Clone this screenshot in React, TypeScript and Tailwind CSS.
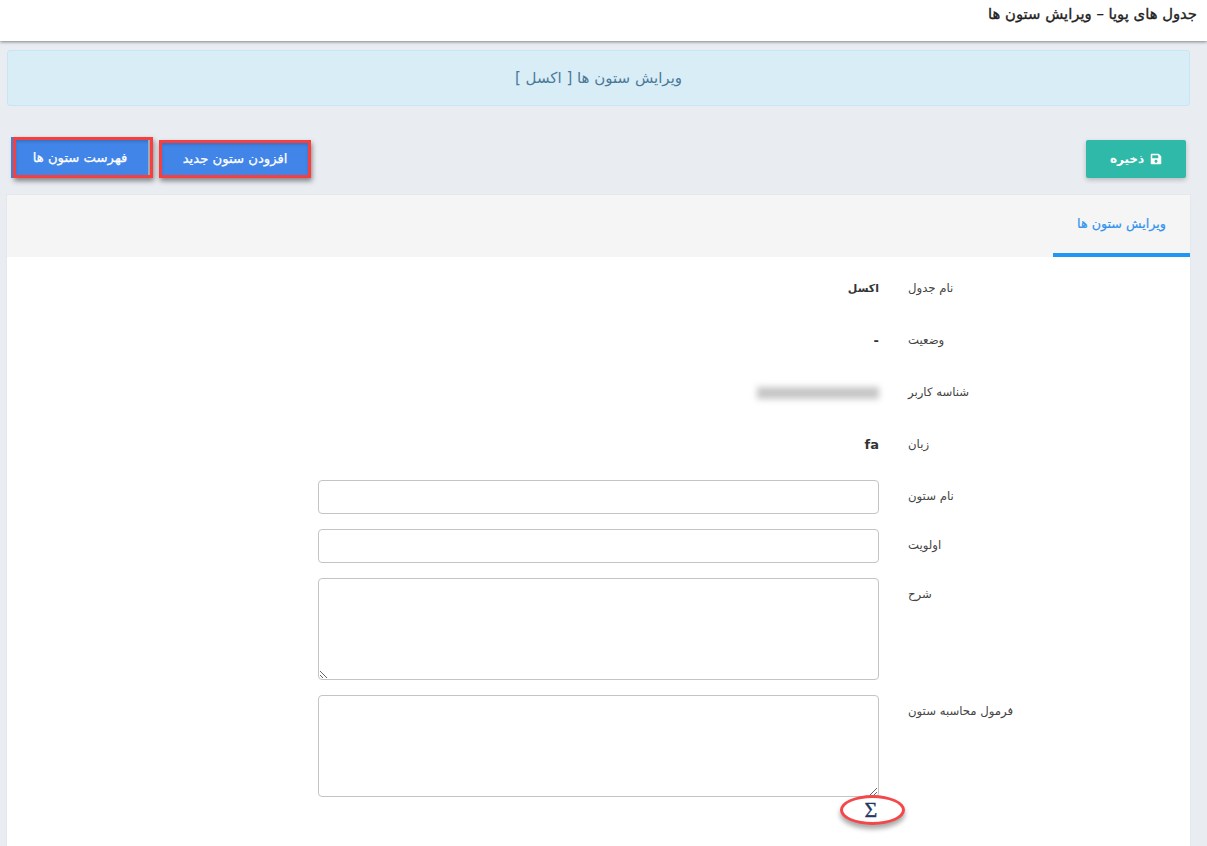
import React from 'react';
import { FaSave } from 'react-icons/fa';

const font = "[font-family:'DejaVu_Sans','Noto_Sans',sans-serif]";

const infoRows = [
  { label: 'نام جدول', value: 'اکسل', size: 'text-[11px]' },
  { label: 'وضعیت', value: '-', size: 'text-[13px]' },
  { label: 'شناسه کاربر', value: '', size: 'text-[13px]' },
  { label: 'زبان', value: 'fa', size: 'text-[13px]' },
];

const App: React.FC = () => {
  return (
    <div dir="rtl" className={`h-[846px] w-[1207px] overflow-hidden bg-[#e9ecf1] ${font}`}>
      {/* Header */}
      <div className="h-[41px] bg-white pt-[5px] pr-[10px] text-[14.8px] leading-[18px] text-[#222] shadow-[0_1px_3px_rgba(0,0,0,0.45)] [-webkit-text-stroke:0.35px_#222]">
        جدول های پویا – ویرایش ستون ها
      </div>

      <div className="pr-[17px] pl-[7px]">
        {/* Alert */}
        <div className="mt-[9px] flex h-[56px] items-center justify-center rounded-[3px] border border-[#c5e6f2] bg-[#d9edf7] text-[15px] text-[#4a7a98]">
          ویرایش ستون ها [ اکسل ]
        </div>

        {/* Action buttons */}
        <div className="mt-[34px] flex h-[38px] items-end justify-between">
          <button className="mr-[4px] flex h-[38px] w-[100px] items-center justify-center gap-[6px] rounded-[2px] bg-[#2fb9a8] text-[12px] font-bold text-white shadow-[0_2px_5px_rgba(0,0,0,0.22)]">
            <FaSave size={12} />
            ذخیره
          </button>
          <div className="flex items-end gap-[6px] pl-[6px]">
            <button className="h-[38px] w-[152px] border-[3px] border-[#f5403f] bg-[#4285e8] text-[13.2px] text-white shadow-[1px_3px_5px_rgba(0,0,0,0.45),inset_0_2px_3px_rgba(0,0,0,0.15)] [-webkit-text-stroke:0.25px_#fff]">
              افزودن ستون جدید
            </button>
            <button className="h-[41px] w-[140px] border-[3px] border-[#f5403f] bg-[#4285e8] pr-[6px] text-[13.2px] text-white shadow-[-2px_0_0_#3f7fdc,1px_3px_5px_rgba(0,0,0,0.45),inset_-2px_0_0_#a3a9b3,inset_0_2px_3px_rgba(0,0,0,0.15)] [-webkit-text-stroke:0.25px_#fff]">
              فهرست ستون ها
            </button>
          </div>
        </div>

        {/* Card */}
        <div className="mt-[17px] h-[700px] bg-white shadow-[0_0_0_1px_#e4e7ec]">
          <div className="flex h-[62px] bg-[#f5f5f5]">
            <div className="flex w-[137px] items-center justify-center border-b-[4px] border-[#2196f3] text-[12.7px] text-[#2f93ee] [-webkit-text-stroke:0.2px_#2f93ee]">
              ویرایش ستون ها
            </div>
          </div>

          <div className="pt-[10px] text-[11.7px] text-[#444]">
            {infoRows.map((row) => (
              <div key={row.label} className="flex h-[52px] items-center">
                <div className="w-[282px] pb-[8px] text-left">{row.label}</div>
                <div className={`mr-[29px] pb-[8px] font-bold text-[#333] ${row.size}`}>
                  {row.value || <div className="h-[12px] w-[122px] bg-[#c6c6c6] blur-[3px]" />}
                </div>
              </div>
            ))}

            <div className="mt-[5px] flex h-[49px] items-start">
              <div className="w-[282px] pt-[8px] text-left">نام ستون</div>
              <input className="mr-[29px] h-[34px] w-[561px] rounded-[4px] border border-[#c4c4c4] bg-white" />
            </div>
            <div className="flex h-[49px] items-start">
              <div className="w-[282px] pt-[8px] text-left">اولویت</div>
              <input className="mr-[29px] h-[34px] w-[561px] rounded-[4px] border border-[#c4c4c4] bg-white" />
            </div>
            <div className="flex h-[117px] items-start">
              <div className="w-[282px] pt-[8px] text-left">شرح</div>
              <textarea className="mr-[29px] h-[102px] w-[561px] rounded-[4px] border border-[#c4c4c4] bg-white" />
            </div>
            <div className="flex items-start">
              <div className="w-[282px] pt-[8px] text-left">فرمول محاسبه ستون</div>
              <div className="relative mr-[29px] w-[561px]">
                <textarea dir="ltr" className="block h-[102px] w-[561px] rounded-[4px] border border-[#c4c4c4] bg-white" />
                <div className="absolute top-[100px] right-[-26px] flex h-[30px] w-[65px] items-center justify-center rounded-[50%] border-[3px] border-[#f4474a] bg-white pr-[3px] font-['Liberation_Serif',serif] text-[22px] leading-none text-[#27375f] shadow-[0_4px_5px_rgba(0,0,0,0.35)] [-webkit-text-stroke:0.35px_#27375f]">
                  Σ
                </div>
              </div>
            </div>
          </div>
        </div>
      </div>
    </div>
  );
};

export default App;
